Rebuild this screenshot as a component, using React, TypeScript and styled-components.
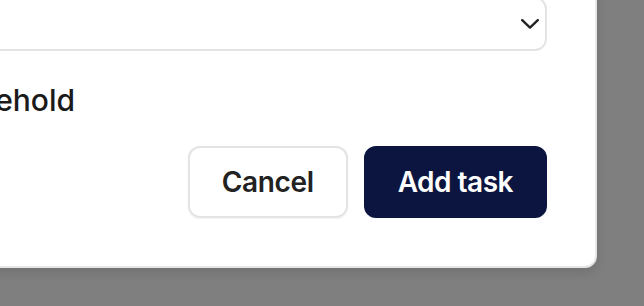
import React from "react";
import styled, { createGlobalStyle } from "styled-components";

const GlobalStyle = createGlobalStyle`
  html, body {
    margin: 0;
    padding: 0;
    background: #7f7f7f;
    overflow: hidden;
  }
  body {
    font-family: Inter, "Noto Sans", sans-serif;
  }
`;

const Overlay = styled.div`
  position: relative;
  width: 644px;
  height: 306px;
  overflow: hidden;
  background: #7f7f7f;
`;

const Dialog = styled.div`
  position: absolute;
  right: 47px;
  bottom: 38px;
  width: 926px;
  box-sizing: border-box;
  padding: 48px;
  background: #ffffff;
  border: 2px solid #e6e6e6;
  border-radius: 12px;
  box-shadow: 0 4px 12px rgba(0, 0, 0, 0.12);
  display: flex;
  flex-direction: column;
`;

const Select = styled.button`
  height: 54px;
  box-sizing: border-box;
  border: 2px solid #e4e4e7;
  border-radius: 12px;
  background: #ffffff;
  display: flex;
  align-items: center;
  justify-content: flex-end;
  padding: 0 6px 0 24px;
  color: #222222;
`;

const CheckRow = styled.label`
  margin-top: 34px;
  display: flex;
  align-items: center;
  gap: 16px;
  font-family: Inter, "Noto Sans", sans-serif;
  font-size: 30px;
  line-height: 30px;
  font-weight: 500;
  letter-spacing: 0;
  color: #1a1a1a;
`;

const Box = styled.span`
  width: 28px;
  height: 28px;
  box-sizing: border-box;
  border: 2px solid #0c1540;
  border-radius: 6px;
`;

const Footer = styled.div`
  margin-top: 31px;
  display: flex;
  justify-content: flex-end;
  gap: 16px;
`;

const Button = styled.button<{ $primary?: boolean }>`
  height: 72px;
  box-sizing: border-box;
  padding: 0 32px;
  border-radius: 12px;
  font-family: Inter, "Noto Sans", sans-serif;
  font-size: 28px;
  font-weight: 600;
  letter-spacing: ${(p) => (p.$primary ? "-0.5px" : "-0.35px")};
  border: 2px solid ${(p) => (p.$primary ? "#0c1540" : "#e4e4e7")};
  background: ${(p) => (p.$primary ? "#0c1540" : "#ffffff")};
  color: ${(p) => (p.$primary ? "#ffffff" : "#222222")};
  box-shadow: ${(p) => (p.$primary ? "none" : "0 1px 2px rgba(0,0,0,0.05)")};
`;

export default function App() {
  return (
    <>
      <GlobalStyle />
      <Overlay>
        <Dialog>
          <Select>
            <svg width="18" height="10" viewBox="0 0 18 10" fill="none">
              <polyline
                points="1.2,1.2 9,8.6 16.8,1.2"
                stroke="currentColor"
                strokeWidth="2.4"
                strokeLinecap="round"
                strokeLinejoin="round"
              />
            </svg>
          </Select>
          <CheckRow>
            <Box />
            Share with household
          </CheckRow>
          <Footer>
            <Button>Cancel</Button>
            <Button $primary>Add task</Button>
          </Footer>
        </Dialog>
      </Overlay>
    </>
  );
}
